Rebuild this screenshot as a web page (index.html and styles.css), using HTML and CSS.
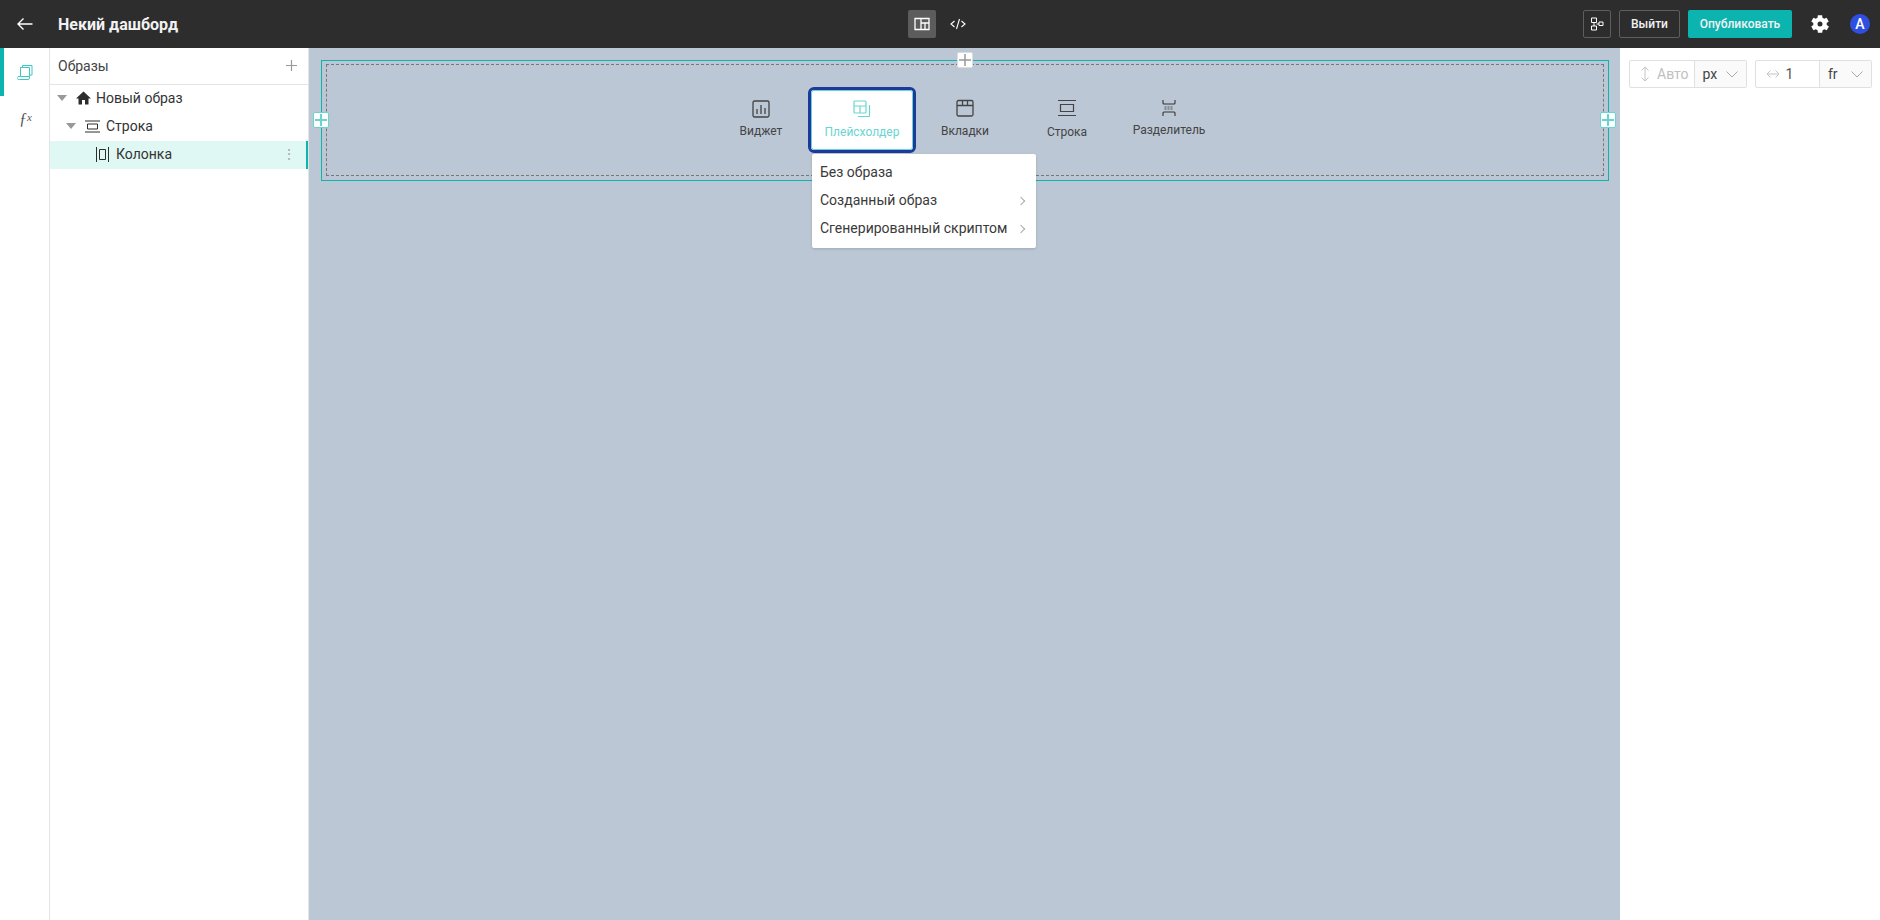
FILE: index.html
```html
<!DOCTYPE html>
<html lang="ru">
<head>
  <meta charset="UTF-8" />
  <title>Некий дашборд</title>
  <link rel="stylesheet" href="styles.css">
</head>
<body>
  <!-- верхняя панель -->
  <header class="topbar">
    <div class="topbar-left">
      <svg class="back-icon" width="18" height="14" viewBox="0 0 18 14"><path d="M16.500 7H2M7.500 1.500 2 7l5.500 5.500" fill="none" stroke="#fff" stroke-width="1.400"/></svg>
      <span class="title">Некий дашборд</span>
    </div>
    <div class="topbar-center">
      <button class="view-btn active">
        <svg width="16" height="14" viewBox="0 0 16 14"><path d="M1 1.500h14v11H1zM7 1.500v11M7 6h8M11 6v6.500" fill="none" stroke="#fff" stroke-width="1.300"/></svg>
      </button>
      <button class="view-btn">
        <svg width="16" height="12" viewBox="0 0 16 12"><path d="M4.500 3 1 6l3.500 3M11.500 3 15 6l-3.500 3M9.500 1 6.500 11" fill="none" stroke="#fff" stroke-width="1.100"/></svg>
      </button>
    </div>
    <div class="topbar-right">
      <button class="btn btn-icon">
        <svg width="14" height="14" viewBox="0 0 14 14"><path d="M1.500 1h5v4.500h-5zM1.500 9h5v4h-5zM9 5h4v3.500H9zM4 5.500V9M6.500 7H9" fill="none" stroke="#fff" stroke-width="1"/></svg>
      </button>
      <button class="btn btn-outline">Выйти</button>
      <button class="btn btn-primary">Опубликовать</button>
      <svg class="gear" width="20" height="20" viewBox="0 0 24 24"><path fill="#fff" fill-rule="evenodd" d="M20 13.200a8 8 0 0 0 0-2.400l2.500-1.900-2.600-4.500-2.900 1.200a8 8 0 0 0-2.100-1.200L14.600 1.400H9.400L9 4.400a8 8 0 0 0-2.100 1.200L4.100 4.400 1.500 8.900 4 10.800a8 8 0 0 0 0 2.400l-2.500 1.900 2.600 4.500 2.900-1.200a8 8 0 0 0 2.100 1.200l.4 3h5.200l.4-3a8 8 0 0 0 2.100-1.200l2.900 1.200 2.600-4.500zM12 15a3 3 0 1 1 0-6 3 3 0 0 1 0 6z"/></svg>
      <span class="avatar">A</span>
    </div>
  </header>

  <div class="workspace">
    <!-- левая колонка с иконками -->
    <nav class="rail">
      <div class="rail-item selected">
        <svg width="16" height="17" viewBox="0 0 16 17"><path d="M3.500 12.500V3.500h9v9M5.500 3.500V1.500h9.500v9.500h-2.500M3.500 12.500H1a1.500 1.500 0 0 0 1.500 3H11a1.500 1.500 0 0 0 1.500-1.500v-1.500z" fill="none" stroke="#3cc8c4" stroke-width="1"/></svg>
      </div>
      <div class="rail-item fx"><i>ƒ</i><i class="fx-x">x</i></div>
    </nav>

    <!-- дерево образов -->
    <aside class="tree-panel">
      <div class="tree-head">
        <span>Образы</span>
        <svg width="13" height="13" viewBox="0 0 13 13"><path d="M6.500 1v11M1 6.500h11" stroke="#999" stroke-width="1.200"/></svg>
      </div>
      <div class="tree-row level-0">
        <span class="caret"></span>
        <svg class="node-icon" width="15" height="14" viewBox="0 0 15 14"><path fill="#2d2d2d" d="M7.500.5 0 7.500h2.500V13.500h3.500V9h3v4.500h3.500V7.500H15z"/></svg>
        <span>Новый образ</span>
      </div>
      <div class="tree-row level-1">
        <span class="caret"></span>
        <svg class="node-icon" width="15" height="13" viewBox="0 0 15 13"><path d="M0 1h15M0 12h15M2.500 4h10v5h-10z" fill="none" stroke="#2d2d2d" stroke-width="1"/></svg>
        <span>Строка</span>
      </div>
      <div class="tree-row level-2 selected">
        <svg class="node-icon" width="13" height="15" viewBox="0 0 13 15"><path d="M.5 0v15M12.500 0v15M3.500 2.500h6v10h-6z" fill="none" stroke="#2d2d2d" stroke-width="1"/></svg>
        <span>Колонка</span>
        <span class="dots">⋮</span>
      </div>
    </aside>

    <!-- холст -->
    <main class="canvas">
      <div class="row-frame">
        <span class="handle handle-top"><svg width="12" height="12" viewBox="0 0 12 12"><path d="M6 0v12M0 6h12" stroke="#999" stroke-width="1.500"/></svg></span>
        <span class="handle handle-left"><svg width="12" height="12" viewBox="0 0 12 12"><path d="M6 0v12M0 6h12" stroke="#6ad5d0" stroke-width="2"/></svg></span>
        <span class="handle handle-right"><svg width="12" height="12" viewBox="0 0 12 12"><path d="M6 0v12M0 6h12" stroke="#6ad5d0" stroke-width="2"/></svg></span>
        <div class="row-inner">
          <div class="tool">
            <svg width="18" height="18" viewBox="0 0 18 18"><path d="M1 2.500A1.500 1.500 0 0 1 2.500 1h13A1.500 1.500 0 0 1 17 2.500v13a1.500 1.500 0 0 1-1.500 1.500h-13A1.500 1.500 0 0 1 1 15.500zM5 9v5M9 5v9M13 8v6" fill="none" stroke="#444" stroke-width="1.300"/></svg>
            <span>Виджет</span>
          </div>
          <div class="tool tool-active">
            <svg width="18" height="18" viewBox="0 0 18 18"><path d="M1 2a1 1 0 0 1 1-1h10a1 1 0 0 1 1 1v10a1 1 0 0 1-1 1H2a1 1 0 0 1-1-1zM1 6h12M7 6v7M16.500 5v11a.5.500 0 0 1-.5.5H5" fill="none" stroke="#6ad5d0" stroke-width="1.200"/></svg>
            <span>Плейсхолдер</span>
          </div>
          <div class="tool tool-tabs">
            <svg width="18" height="18" viewBox="0 0 18 18"><path d="M1 6.500h16v9a1.500 1.500 0 0 1-1.500 1.500h-13A1.500 1.500 0 0 1 1 15.500zM2.500 1.500h13A1.500 1.500 0 0 1 17 3v3.500H1V3a1.500 1.500 0 0 1 1.500-1.500zM6.500 1.500v5M11.500 1.500v5" fill="none" stroke="#444" stroke-width="1.300"/></svg>
            <span>Вкладки</span>
          </div>
          <div class="tool tool-row">
            <svg width="18" height="18" viewBox="0 0 18 18"><path d="M0 1.500h18M0 16.500h18M2.500 5.500h13v7h-13z" fill="none" stroke="#444" stroke-width="1.200"/></svg>
            <span>Строка</span>
          </div>
          <div class="tool tool-divider">
            <svg width="14" height="16" viewBox="0 0 14 16"><path d="M1 0v3a1 1 0 0 0 1 1h10a1 1 0 0 0 1-1V0M1 16v-3a1 1 0 0 1 1-1h10a1 1 0 0 1 1 1v3" fill="none" stroke="#333" stroke-width="1.100"/><path d="M2.500 7h9M2.500 9h9" stroke="#555" stroke-width="1" stroke-dasharray="2 1"/></svg>
            <span>Разделитель</span>
          </div>
        </div>

        <ul class="menu">
          <li>Без образа</li>
          <li>Созданный образ <span class="chevron"></span></li>
          <li>Сгенерированный скриптом <span class="chevron"></span></li>
        </ul>
      </div>
    </main>

    <!-- размеры -->
    <aside class="props">
      <div class="size-field">
        <span class="size-value muted">
          <svg width="10" height="16" viewBox="0 0 10 16"><path d="M5 1v14M1.500 4.500 5 1l3.500 3.500M1.500 11.500 5 15l3.500-3.500" fill="none" stroke="#c4c4c4" stroke-width="1"/></svg>
          Авто
        </span>
        <span class="size-unit">px <svg width="12" height="7" viewBox="0 0 12 7"><path d="M.5.500 6 6 11.500.5" fill="none" stroke="#aaa" stroke-width="1"/></svg></span>
      </div>
      <div class="size-field">
        <span class="size-value">
          <svg width="14" height="10" viewBox="0 0 14 10"><path d="M1 5h12M4.500 1.500 1 5l3.500 3.500M9.500 1.500 13 5 9.500 8.500" fill="none" stroke="#c4c4c4" stroke-width="1"/></svg>
          1
        </span>
        <span class="size-unit">fr <svg width="12" height="7" viewBox="0 0 12 7"><path d="M.5.500 6 6 11.500.5" fill="none" stroke="#aaa" stroke-width="1"/></svg></span>
      </div>
    </aside>
  </div>
</body>
</html>
```

FILE: styles.css
```css
* {
  box-sizing: border-box;
}

html, body {
  height: 100%;
}

body {
  margin: 0;
  display: flex;
  flex-direction: column;
  height: 920px;
  overflow: hidden;
  font-family: Roboto, "Liberation Sans", sans-serif;
  font-size: 14px;
  color: #333;
  background: #fff;
}

button {
  font-family: inherit;
}

/* top bar */
.topbar {
  position: relative;
  flex: none;
  height: 48px;
  display: flex;
  align-items: center;
  justify-content: space-between;
  background: #2d2d2d;
  color: #fff;
}

.topbar-left {
  display: flex;
  align-items: center;
  padding-left: 16px;
}

.title {
  margin-left: 24px;
  font-size: 16px;
  font-weight: 700;
  color: #f2f2f2;
}

.topbar-center {
  position: absolute;
  left: 908px;
  top: 10px;
  display: flex;
  gap: 8px;
}

.view-btn {
  width: 28px;
  height: 28px;
  padding: 0;
  display: flex;
  align-items: center;
  justify-content: center;
  border: 0;
  border-radius: 2px;
  background: none;
}

.view-btn.active {
  background: #5c5c5c;
}

.topbar-right {
  display: flex;
  align-items: center;
  padding-right: 10px;
}

.btn {
  height: 28px;
  display: flex;
  align-items: center;
  justify-content: center;
  border-radius: 2px;
  font-size: 12px;
  font-weight: 500;
  color: #f2f2f2;
}

.btn-icon {
  width: 28px;
  padding: 0;
  margin-right: 8px;
  border: 1px solid #5e5e5e;
  background: none;
}

.btn-outline {
  width: 61px;
  margin-right: 8px;
  border: 1px solid #5e5e5e;
  background: none;
}

.btn-primary {
  width: 104px;
  margin-right: 18px;
  border: 0;
  background: #0cb4b0;
}

.gear {
  margin-right: 20px;
}

.avatar {
  width: 20px;
  height: 20px;
  display: flex;
  align-items: center;
  justify-content: center;
  border-radius: 50%;
  background: #2f4fe0;
  font-size: 14px;
  font-weight: 500;
}

/* main area */
.workspace {
  flex: 1;
  display: flex;
  min-height: 0;
}

.rail {
  flex: none;
  width: 50px;
  border-right: 1px solid #e4e4e4;
}

.rail-item {
  height: 48px;
  display: flex;
  align-items: center;
  justify-content: center;
  padding-left: 1px;
}

.rail-item.selected {
  box-shadow: inset 4px 0 0 #0cb4b0;
}

.fx {
  height: 46px;
  padding-left: 2px;
  font-family: "Liberation Serif", serif;
  font-size: 16px;
  color: #555;
}

.fx-x {
  font-size: 11px;
  margin-top: -5px;
}

.tree-panel {
  flex: none;
  width: 259px;
  border-right: 1px solid #e4e4e4;
}

.tree-head {
  height: 37px;
  display: flex;
  align-items: center;
  justify-content: space-between;
  padding: 0 10px 1px 8px;
  border-bottom: 1px solid #e4e4e4;
  color: #444;
}

.tree-row {
  height: 28px;
  display: flex;
  align-items: center;
  padding-bottom: 2px;
  color: #333;
}

.level-0 {
  padding-left: 7px;
}

.level-1 {
  padding-left: 16px;
}

.level-2 {
  padding-left: 46px;
}

.tree-row.selected {
  background: #e0f8f4;
  box-shadow: inset -2px 0 0 #0cb4b0;
}

.caret {
  width: 0;
  height: 0;
  margin-right: 9px;
  border-left: 5px solid transparent;
  border-right: 5px solid transparent;
  border-top: 6px solid #999;
}

.node-icon {
  margin-right: 5px;
  flex: none;
}

.level-1 .node-icon {
  margin-right: 6px;
}

.level-2 .node-icon {
  margin-right: 7px;
}

.dots {
  margin-left: auto;
  margin-right: 12px;
  color: #aaa;
  font-size: 14px;
}

/* canvas */
.canvas {
  flex: 1;
  min-width: 0;
  padding: 12px 11px 0 12px;
  background: #bbc7d4;
}

.row-frame {
  position: relative;
  height: 121px;
  padding: 3px 4px 4px 4px;
  border: 1px solid #0cb4b0;
}

.row-inner {
  height: 100%;
  display: flex;
  justify-content: center;
  padding-top: 22px;
  border: 1px dashed #777;
}

.tool {
  width: 102px;
  height: 66px;
  display: flex;
  flex-direction: column;
  align-items: center;
  padding-top: 13px;
  gap: 6px;
  font-size: 12px;
  color: #444;
}

.tool-active {
  width: 108px;
  margin: 0 -2px 0 -4px;
  padding-top: 10px;
  gap: 7px;
  border: 3px solid #1c3a9c;
  border-radius: 6px;
  background: #fff;
  color: #6ad5d0;
  outline: 1px solid #6ad5d0;
  outline-offset: -4px;
}

.tool-tabs {
  padding-top: 12px;
  gap: 7px;
}

.tool-row {
  padding-top: 12px;
  gap: 8px;
}

.tool-divider {
  padding-top: 13px;
  gap: 7px;
}

.handle {
  position: absolute;
  width: 16px;
  height: 16px;
  display: flex;
  align-items: center;
  justify-content: center;
  background: #fff;
  border: 1px solid #6ad5d0;
  border-radius: 2px;
}

.handle-top {
  left: 50%;
  top: -9px;
  margin-left: -8px;
  border-color: #ddd;
}

.handle-left {
  left: -9px;
  top: 51px;
}

.handle-right {
  right: -8px;
  top: 51px;
}

.menu {
  position: absolute;
  left: 490px;
  top: 93px;
  width: 224px;
  margin: 0;
  padding: 4px 0 6px;
  list-style: none;
  background: #fff;
  border-radius: 2px;
  box-shadow: 0 1px 3px rgba(0, 0, 0, 0.15);
}

.menu li {
  position: relative;
  height: 28px;
  line-height: 28px;
  padding-left: 8px;
  color: #3a3a3a;
}

.chevron {
  position: absolute;
  right: 12px;
  top: 12px;
  width: 6px;
  height: 6px;
  border-top: 1px solid #aaa;
  border-right: 1px solid #aaa;
  transform: rotate(45deg);
}

/* right panel */
.props {
  flex: none;
  width: 260px;
  display: flex;
  align-items: flex-start;
  gap: 8px;
  padding: 12px 8px 0 9px;
}

.size-field {
  width: 118px;
  height: 28px;
  display: flex;
  border: 1px solid #e0e0e0;
  border-radius: 2px;
}

.size-value {
  flex: 1;
  min-width: 0;
  display: flex;
  align-items: center;
  gap: 6px;
  padding-left: 10px;
  color: #555;
}

.size-value.muted {
  gap: 7px;
  color: #c0c0c0;
}

.size-unit {
  flex: none;
  width: 52px;
  display: flex;
  align-items: center;
  justify-content: space-between;
  padding: 0 8px;
  border-left: 1px solid #e0e0e0;
  background: #fafafa;
  color: #444;
}
```
